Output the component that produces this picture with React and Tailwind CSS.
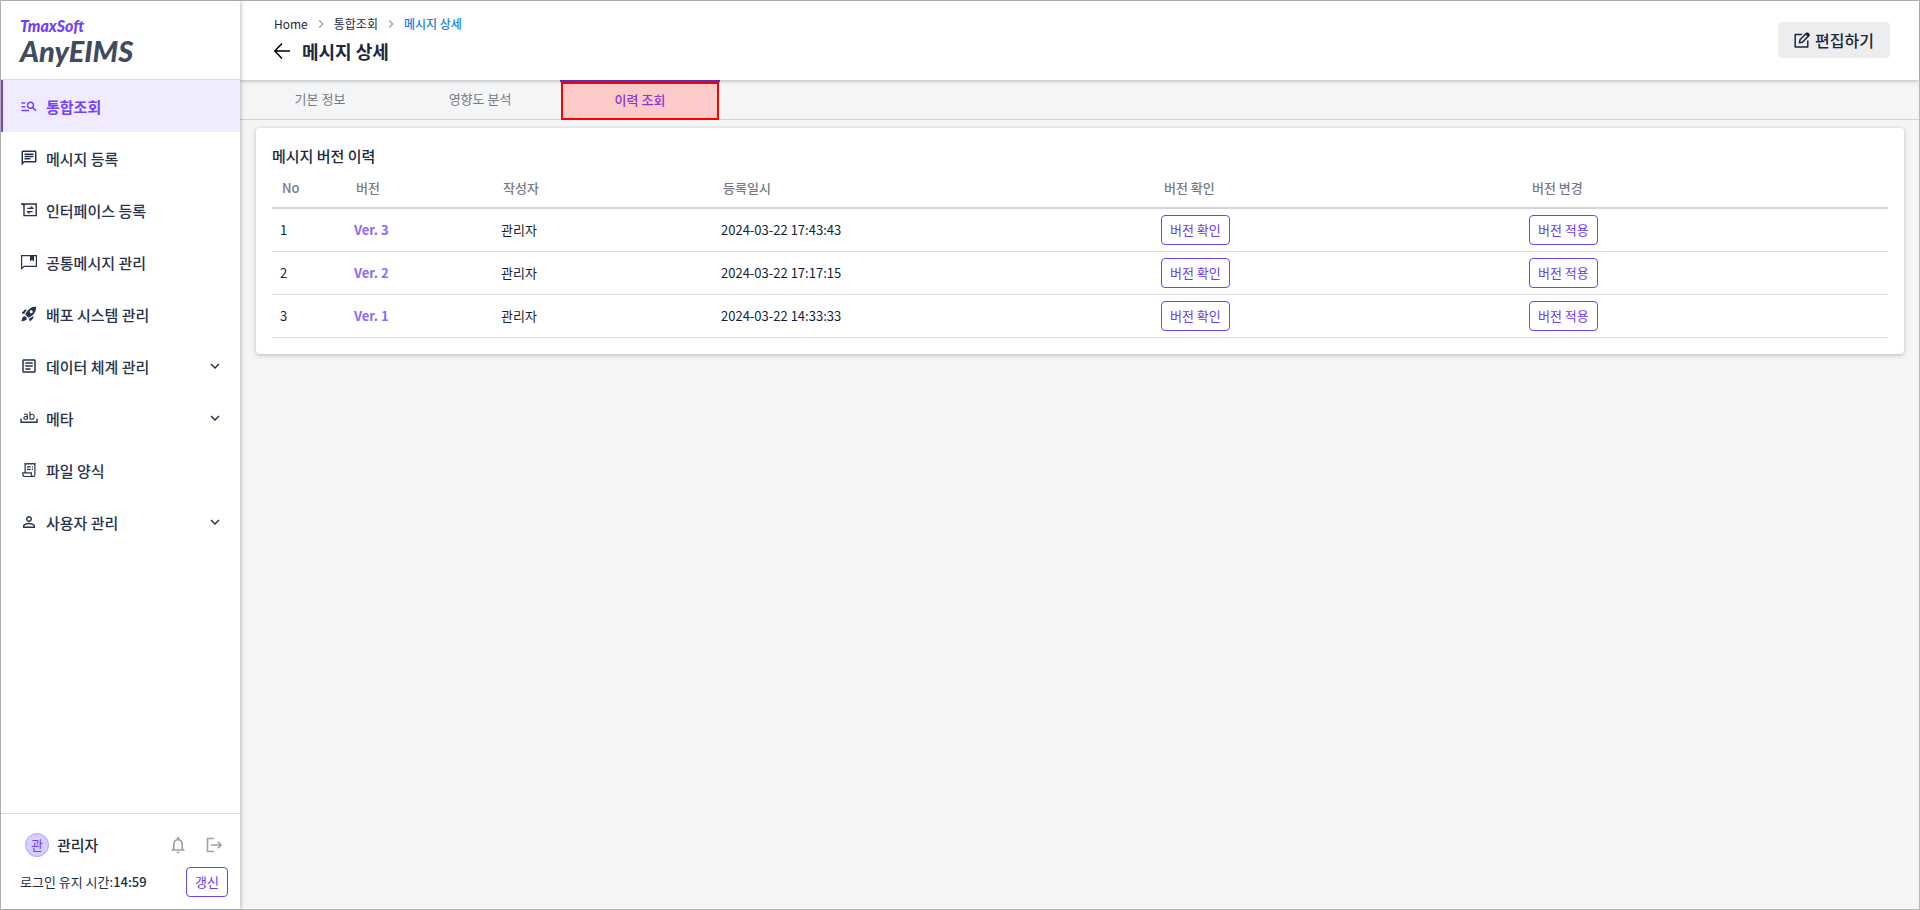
import React from "react";
import {
  MdManageSearch,
  MdOutlineChat,
  MdRocketLaunch,
  MdOutlineArticle,
  MdPersonOutline,
  MdKeyboardArrowDown,
  MdChevronRight,
  MdNotificationsNone,
} from "react-icons/md";

function InterfaceIcon() {
  return (
    <svg viewBox="0 0 16 16" className="w-4 h-4" fill="none" stroke="currentColor">
      <path d="M0.2 2H15.2V13.6H3V2" strokeWidth="1.4" />
      <path d="M0 1.4l3.4 3.2V1.4z" fill="currentColor" stroke="none" />
      <path d="M6.4 6.4H12.4M6 9.6h5.6" strokeWidth="1.3" />
      <path d="M9.6 3.8v2.8h3.2zM8.6 12.2V9.4H5.4z" fill="currentColor" stroke="none" />
    </svg>
  );
}

function BookmarkChatIcon() {
  return (
    <svg viewBox="0 0 16 16" className="w-4 h-4" fill="none" stroke="currentColor">
      <path d="M0.6 14.6V1.6H15.4V12.4H3L0.6 14.6z" strokeWidth="1.2" />
      <path d="M9 1.5h4v6l-2-1.4-2 1.4z" fill="currentColor" stroke="none" />
    </svg>
  );
}

function MetaIcon() {
  return (
    <svg viewBox="0 0 18 16" className="w-full h-4" fill="none" stroke="currentColor">
      <path d="M1 8.5V12.3H17V8.5" strokeWidth="1.4" />
      <path d="M4 4.6C5 3.6 7.4 3.7 7.4 5.5V9.6M7.4 6.4C5 6.3 3.8 6.9 3.8 8.1C3.8 9.8 6.4 9.9 7.4 8.3" strokeWidth="1.1" />
      <path d="M10 1.4V9.6M10 5.6C11 3.6 14.2 3.8 14.2 6.7C14.2 9.6 11 9.9 10 8" strokeWidth="1.1" />
    </svg>
  );
}

function ReceiptIcon() {
  return (
    <svg viewBox="0 0 16 16" className="w-4 h-4" fill="none" stroke="currentColor" strokeWidth="1.2">
      <path d="M4.1 10.6V1.4l1.3.6 1.2-.6 1.2.6 1.2-.6 1.2.6 1.2-.6 1.2.6 1.3-.6V12.8a1.7 1.7 0 0 1-1.7 1.7H3.6a1.7 1.7 0 0 1-1.7-1.7V10.8H10.4V12.6c0 1.2.7 1.9 1.8 1.9" />
      <path d="M6 4.8h3.6M6 7.4h3.6M10.8 4.8h1.2M10.8 7.4h1.2" />
    </svg>
  );
}

function EditIcon() {
  return (
    <svg viewBox="0 0 16 16" className="w-4 h-4" fill="none" stroke="currentColor" strokeWidth="1.5">
      <path d="M8 2.5H1.2V15H13.8V8.5" strokeLinejoin="round" />
      <path d="M5.4 10.8l.6-3L12.2 1.5a1.2 1.2 0 0 1 1.7 0l.7.7a1.2 1.2 0 0 1 0 1.7L8.4 10.2z" strokeLinejoin="round" />
      <path d="M11.2 2.2l1.3-1.4h1.8l1.2 1.4v1.5l-1.4 1.3z" fill="currentColor" stroke="none" />
    </svg>
  );
}

function LogoutIcon() {
  return (
    <svg viewBox="0 0 16 16" className="w-4 h-4" fill="none" stroke="currentColor" strokeWidth="1.6">
      <path d="M8 1.5H1.5V14.5H8M5 8H15M11.8 4.8L15 8l-3.2 3.2" />
    </svg>
  );
}

const menus = [
  { name: "통합조회", icon: <MdManageSearch className="w-5 h-5" />, active: true },
  { name: "메시지 등록", icon: <MdOutlineChat className="w-[18px] h-[18px]" /> },
  { name: "인터페이스 등록", icon: <InterfaceIcon /> },
  { name: "공통메시지 관리", icon: <BookmarkChatIcon /> },
  { name: "배포 시스템 관리", icon: <MdRocketLaunch className="w-[18px] h-[18px]" /> },
  { name: "데이터 체계 관리", icon: <MdOutlineArticle className="w-[18px] h-[18px]" />, open: true },
  { name: "메타", icon: <MetaIcon />, open: true },
  { name: "파일 양식", icon: <ReceiptIcon /> },
  { name: "사용자 관리", icon: <MdPersonOutline className="w-[18px] h-[18px]" />, open: true },
];

const tabs = ["기본 정보", "영향도 분석"];

const versions = [
  { no: 1, version: "Ver. 3", writer: "관리자", date: "2024-03-22 17:43:43" },
  { no: 2, version: "Ver. 2", writer: "관리자", date: "2024-03-22 17:17:15" },
  { no: 3, version: "Ver. 1", writer: "관리자", date: "2024-03-22 14:33:33" },
];

const outlineButton =
  "h-[30px] px-2 rounded border border-[#6f42f5] bg-white text-[#6a3af5] text-[13px]";

function Sidebar() {
  return (
    <aside className="relative z-20 w-[239px] shrink-0 flex flex-col bg-white shadow-[1px_0_4px_rgba(0,0,0,0.25)]">
      <div className="h-[79px] pl-[19px] pt-4 border-b border-[#dcdcdc] font-[Lato,sans-serif] font-black italic">
        <div className="text-base leading-[18px] text-[#7341fa]">TmaxSoft</div>
        <div className="text-[29px] leading-8 text-[#424b5e]">AnyEIMS</div>
      </div>

      <nav className="flex-1">
        {menus.map((m) => (
          <a
            key={m.name}
            href="#"
            className={`flex items-center h-[52px] pl-[17px] pr-4 border-l-2 text-[15px] ${
              m.active
                ? "bg-[#f0ebff] border-[#7341fa] text-[#7341fa] font-bold"
                : "border-transparent text-[#28324a] font-medium"
            }`}
          >
            <span className="w-[18px] mr-2 flex justify-center shrink-0">{m.icon}</span>
            <span className="flex-1 pt-0.5">{m.name}</span>
            {m.open && <MdKeyboardArrowDown className="w-[18px] h-[18px]" />}
          </a>
        ))}
      </nav>

      <div className="h-[96px] border-t border-[#dcdcdc] pl-[19px] pr-3 pt-[19px] text-[#222c42]">
        <div className="flex items-center h-6 pl-[5px] pr-[6px]">
          <span className="w-6 h-6 rounded-full border border-[#b9a0fb] bg-[#d9ccff] text-[#7341fa] text-[13px] flex items-center justify-center">
            관
          </span>
          <span className="ml-2 flex-1 text-[15px] font-medium">관리자</span>
          <button aria-label="알림" className="text-[#9da2ac]">
            <MdNotificationsNone className="w-5 h-5" />
          </button>
          <button aria-label="로그아웃" className="ml-[18px] text-[#9da2ac]">
            <LogoutIcon />
          </button>
        </div>
        <div className="flex items-center justify-between mt-[10px]">
          <span className="text-[13px]">
            로그인 유지 시간:<span className="font-medium">14:59</span>
          </span>
          <button className={outlineButton}>갱신</button>
        </div>
      </div>
    </aside>
  );
}

function Header() {
  return (
    <header className="relative z-10 flex justify-between h-[79px] pl-[34px] pr-[29px] bg-white shadow-[0_1px_4px_rgba(0,0,0,0.25)]">
      <div>
        <nav className="flex items-center gap-[5px] mt-[13px] text-xs leading-5 text-[#1c2740]">
          <a href="#">Home</a>
          <MdChevronRight className="w-4 h-4 text-[#9da2ac]" />
          <a href="#">통합조회</a>
          <MdChevronRight className="w-4 h-4 text-[#9da2ac]" />
          <a href="#" className="font-medium text-[#1a7fe8]">메시지 상세</a>
        </nav>
        <div className="flex items-center gap-3 h-6 mt-[5px]">
          <button aria-label="뒤로">
            <svg viewBox="0 0 16 16" className="w-4 h-4" fill="none" stroke="#000" strokeWidth="1.5">
              <path d="M16 8H1M8 0.5L0.8 8L8 15.5" />
            </svg>
          </button>
          <h1 className="text-lg font-bold text-[#1c2740]">메시지 상세</h1>
        </div>
      </div>
      <button className="flex items-center gap-[5px] h-9 mt-[21px] px-4 rounded bg-[#ebedef] text-base font-medium text-[#1c2740]">
        <EditIcon /> 편집하기
      </button>
    </header>
  );
}

export default function App() {
  return (
    <div className="flex min-h-screen border border-[#b9b9b9] bg-[#f4f5f7] font-['Noto_Sans_CJK_KR',sans-serif]">
      <Sidebar />
      <div className="flex-1 min-w-0">
        <Header />

        <div className="flex h-10 border-b border-[#d2d4d8] text-[13px]">
          {tabs.map((t) => (
            <button key={t} className="w-40 pb-0.5 text-[#757a85]">
              {t}
            </button>
          ))}
          <button className="w-40 h-10 border-t-2 border-[#6236e0] font-medium text-[#8f35cc]">
            <span className="flex items-center justify-center h-[38px] mx-px pb-0.5 border-2 border-[#ff0000] bg-[#fdcaca]">
              이력 조회
            </span>
          </button>
        </div>

        <main className="mt-2 ml-4 mr-[15px] px-4 pt-[18px] pb-4 rounded bg-white shadow-[0_1px_4px_rgba(0,0,0,0.25)]">
          <h2 className="text-[15px] leading-5 font-medium text-[#1c2740]">메시지 버전 이력</h2>
          <table className="w-full table-fixed text-[13px] text-[#141e36]">
            <thead>
              <tr className="h-[42px] border-b-2 border-[#d3d3da] text-left text-[#777a85]">
                <th className="w-[74px] pl-[10px] pt-0.5 font-medium">No</th>
                <th className="w-[147px] pl-[10px] pt-0.5 font-medium">버전</th>
                <th className="w-[220px] pl-[10px] pt-0.5 font-medium">작성자</th>
                <th className="w-[441px] pl-[10px] pt-0.5 font-medium">등록일시</th>
                <th className="w-[368px] pl-[10px] pt-0.5 font-medium">버전 확인</th>
                <th className="pl-[10px] pt-0.5 font-medium">버전 변경</th>
              </tr>
            </thead>
            <tbody>
              {versions.map((v) => (
                <tr key={v.no} className="h-[43px] border-b border-[#dcdce0]">
                  <td className="pl-2">{v.no}</td>
                  <td className="pl-2 font-bold text-[#8f66ff]">{v.version}</td>
                  <td className="pl-2">{v.writer}</td>
                  <td className="pl-2">{v.date}</td>
                  <td className="pl-[7px]">
                    <button className={outlineButton}>버전 확인</button>
                  </td>
                  <td className="pl-[7px]">
                    <button className={outlineButton}>버전 적용</button>
                  </td>
                </tr>
              ))}
            </tbody>
          </table>
        </main>
      </div>
    </div>
  );
}
